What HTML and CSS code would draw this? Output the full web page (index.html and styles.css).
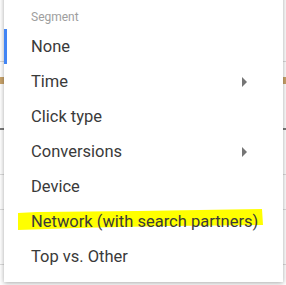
FILE: index.html
```html
<!DOCTYPE html>
<html>
	<head>
		<title>Segment menu</title>
		<link rel="stylesheet" href="styles.css">
	</head>
	<body>
		<div class="page">
			<div class="row r1"></div>
			<div class="row r2"><span class="chip"></span></div>
			<div class="row r3"></div>
			<div class="row r4"></div>
			<div class="row r5"></div>
			<div class="row r6"></div>
			<div class="under">Clicks, Impr.</div>
		</div>

		<div class="menu">
			<div class="head">Segment</div>
			<div class="item selected">None</div>
			<div class="item">Time <span class="arrow"></span></div>
			<div class="item">Click type</div>
			<div class="item">Conversions <span class="arrow"></span></div>
			<div class="item">Device</div>
			<div class="item mark">
				<svg class="marker" width="250" height="26" viewBox="0 0 250 26">
					<polygon points="1,7 20,6 120,5 245,3 246,19 150,20 60,22 1,24" fill="#ffff00"/>
				</svg>
				<span class="label">Network (with search partners)</span>
			</div>
			<div class="item">Top vs. Other</div>
		</div>
	</body>
</html>
```

FILE: styles.css
```css
html, body {
	margin: 0;
	padding: 0;
}

body {
	width: 286px;
	height: 285px;
	overflow: hidden;
	position: relative;
	background: #fff;
	font-family: Roboto, "Liberation Sans", sans-serif;
}

.page {
	height: 285px;
}

.row {
	border-bottom: 1px solid #dcdcdc;
}

.r1 { height: 61px; }
.r2 { height: 51px; border-bottom: 2px solid #7a7a7a; }
.r3 { height: 44px; }
.r4 { height: 34px; }
.r5 { height: 54px; }
.r6 { height: 25px; border: 0; }

.chip {
	display: block;
	width: 286px;
	height: 7px;
	margin-top: 15px;
	background: #c9a46b;
}

.under {
	font-size: 12px;
	line-height: 14px;
	color: #333;
	padding-left: 178px;
	margin-top: 5px;
}

.menu {
	position: absolute;
	left: 4px;
	top: -10px;
	width: 279px;
	height: 292px;
	background: #fff;
	box-shadow: 0 1px 5px rgba(0, 0, 0, 0.35);
}

.head {
	font-size: 12px;
	color: #9e9e9e;
	padding: 20px 0 0 27px;
	height: 19px;
	line-height: 14px;
}

.item {
	position: relative;
	height: 35px;
	line-height: 35px;
	font-size: 16.5px;
	color: #3a3a3a;
	padding-left: 27px;
}

.selected {
	box-shadow: inset 3px 0 0 #4285f4;
}

.arrow {
	position: absolute;
	right: 36px;
	top: 13px;
	width: 0;
	height: 0;
	border-top: 5px solid transparent;
	border-bottom: 5px solid transparent;
	border-left: 5px solid #757575;
}

.marker {
	position: absolute;
	left: 13px;
	top: 2px;
}

.label {
	position: relative;
}
```
